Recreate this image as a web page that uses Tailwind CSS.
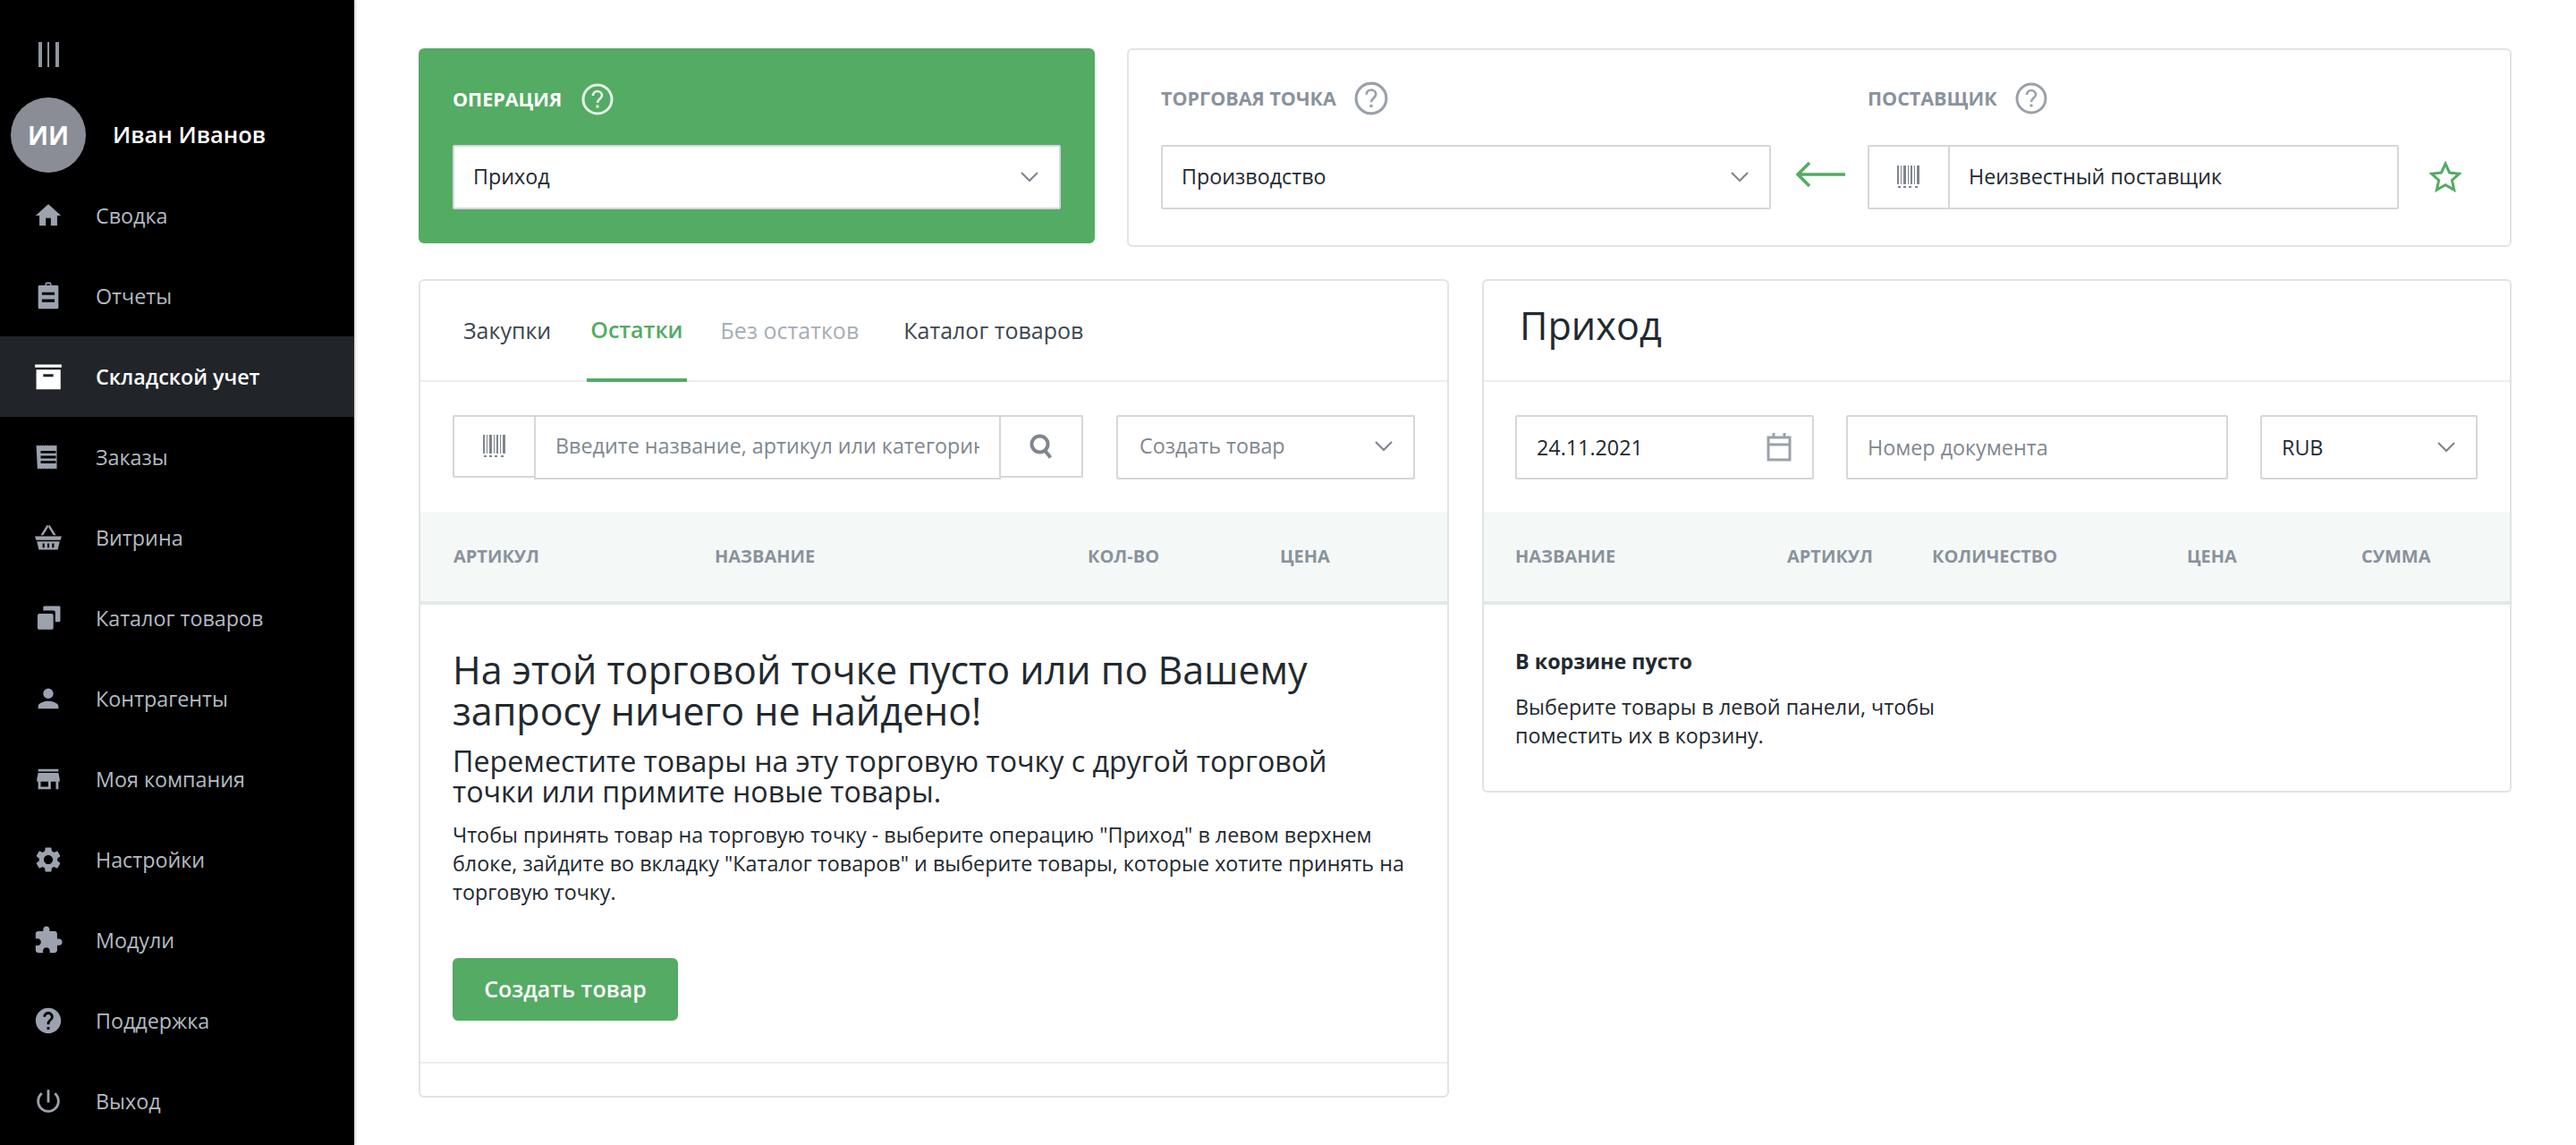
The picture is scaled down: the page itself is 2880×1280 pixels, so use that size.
<!DOCTYPE html>
<html lang="ru">
<head>
  <meta charset="UTF-8" />
  <title>Складской учет</title>
  <script src="https://cdn.jsdelivr.net/npm/@tailwindcss/browser@4"></script>
</head>
<body class="bg-white font-['Open_Sans',sans-serif] text-[#22292f]">
  <div class="flex h-[1280px] w-[2880px] overflow-hidden">

    <!-- sidebar -->
    <aside class="w-[396px] h-full shrink-0 bg-black text-[23.300px] text-[#b4bac2] shadow-[2px_0_2px_rgba(0,0,0,0.15)]">
      <div class="h-[109px] flex items-start pt-[47px] pl-[43px] gap-[6px]">
        <span class="w-[4px] h-[28px] bg-[#8f959e]"></span>
        <span class="w-[2px] h-[28px] bg-[#8f959e]"></span>
        <span class="w-[4px] h-[28px] ml-[1px] bg-[#8f959e]"></span>
      </div>
      <div class="h-[87px] flex items-start">
        <div class="ml-[12px] w-[84px] h-[84px] rounded-full bg-[#8a8d96] flex items-center justify-center text-white font-bold text-[28px]">ИИ</div>
        <div class="ml-[30px] h-[82px] flex items-center text-white font-semibold text-[25.500px]">Иван Иванов</div>
      </div>
      <nav>
        <a class="h-[90px] flex items-center">
          <svg class="w-[34px] h-[34px] ml-[37px] mr-[36px] fill-[#9ca3af]" viewBox="0 0 24 24"><path d="M10 20v-6h4v6h5v-8h3L12 3 2 12h3v8z"/></svg>
          Сводка
        </a>
        <a class="h-[90px] flex items-center">
          <svg class="w-[34px] h-[34px] ml-[37px] mr-[36px] fill-[#9ca3af]" viewBox="0 0 24 24"><path fill-rule="evenodd" d="M4 4.500c0-.6.4-1 1-1h4.500V2.500c0-.8.6-1.500 1.500-1.500h2c.9 0 1.500.7 1.500 1.500v1H19c.6 0 1 .4 1 1V21c0 .6-.4 1-1 1H5c-.6 0-1-.4-1-1zM7 9v2.200h10V9zM7 14.500v2.200h10v-2.200zM10.500 2.300v1.200h3V2.300z"/></svg>
          Отчеты
        </a>
        <a class="h-[90px] flex items-center bg-[#212529] text-white font-semibold">
          <svg class="w-[34px] h-[34px] ml-[37px] mr-[36px] fill-white" viewBox="0 0 24 24"><path fill-rule="evenodd" d="M2.500 2.500h21v2.200h-21zM3.500 6.500h19.200v15.500H3.500zM9 10v2.200h8V10z" transform="translate(-1 0)"/></svg>
          Складской учет
        </a>
        <a class="h-[90px] flex items-center">
          <svg class="w-[34px] h-[34px] ml-[37px] mr-[36px] fill-[#9ca3af]" viewBox="0 0 24 24"><path fill-rule="evenodd" d="M2.500 2.500l.9.6.9-.6.9.6.9-.6.9.6.9-.6.9.6.9-.6.9.6.9-.6.9.6.9-.6.9.6.9-.6.9.6.9-.6.9.6.9-.6v19l-.9-.6-.9.6-.9-.6-.9.6-.9-.6-.9.6-.9-.6-.9.6-.9-.6-.9.6-.9-.6-.9.6-.9-.6-.9.6-.9-.6-.9.6-.9-.6zM6 7v2h12V7zM6 11v2h12v-2zM6 15v2h12v-2z"/></svg>
          Заказы
        </a>
        <a class="h-[90px] flex items-center">
          <svg class="w-[34px] h-[34px] ml-[37px] mr-[36px] fill-[#9ca3af]" viewBox="0 0 24 24"><path fill-rule="evenodd" d="M1.500 11h21l-.8 3H2.300zM3 15h18l-1.500 6.500h-15zM7.500 16.500v3.500h1.500v-3.500zM11.250 16.500v3.500h1.500v-3.500zM15 16.500v3.500h1.500v-3.500zM11 2l1.200 1.200L8 10H6zM13 2l-1.200 1.200L16 10h2z"/></svg>
          Витрина
        </a>
        <a class="h-[90px] flex items-center">
          <svg class="w-[34px] h-[34px] ml-[37px] mr-[36px] fill-[#9ca3af]" viewBox="0 0 24 24"><path d="M3.500 10c0-.9.7-1.500 1.500-1.500h9.500c.9 0 1.500.6 1.500 1.500v9.500c0 .9-.7 1.500-1.500 1.500H5c-.9 0-1.500-.6-1.500-1.500zM8 3.500c0-.6.4-1 1-1h11.500c.6 0 1 .4 1 1V14c0 .6-.4 1-1 1h-3V7.500c0-1-.5-1.500-1.500-1.500H8z"/></svg>
          Каталог товаров
        </a>
        <a class="h-[90px] flex items-center">
          <svg class="w-[34px] h-[34px] ml-[37px] mr-[36px] fill-[#9ca3af]" viewBox="0 0 24 24"><path d="M12 12c2.210 0 4-1.790 4-4s-1.790-4-4-4-4 1.790-4 4 1.790 4 4 4zm0 2c-2.670 0-8 1.340-8 4v2h16v-2c0-2.660-5.330-4-8-4z"/></svg>
          Контрагенты
        </a>
        <a class="h-[90px] flex items-center">
          <svg class="w-[34px] h-[34px] ml-[37px] mr-[36px] fill-[#9ca3af]" viewBox="0 0 24 24"><path d="M20 4H4v2h16V4zm1 10v-2l-1-5H4l-1 5v2h1v6h10v-6h4v6h2v-6h1zm-9 4H6v-4h6v4z"/></svg>
          Моя компания
        </a>
        <a class="h-[90px] flex items-center">
          <svg class="w-[34px] h-[34px] ml-[37px] mr-[36px] fill-[#9ca3af]" viewBox="0 0 24 24"><path d="M19.140 12.940c.04-.3.06-.61.06-.94 0-.32-.02-.64-.07-.94l2.030-1.580c.18-.14.23-.41.12-.61l-1.920-3.320c-.12-.22-.37-.29-.59-.22l-2.390.96c-.5-.38-1.030-.7-1.620-.94l-.36-2.540c-.04-.24-.24-.41-.48-.41h-3.840c-.24 0-.43.17-.47.41l-.36 2.540c-.59.24-1.130.57-1.620.94l-2.390-.96c-.22-.08-.47 0-.59.22L2.740 8.870c-.12.21-.08.47.12.61l2.030 1.580c-.05.3-.09.63-.09.94s.02.64.07.94l-2.030 1.580c-.18.14-.23.41-.12.61l1.920 3.320c.12.22.37.29.59.22l2.390-.96c.5.38 1.030.7 1.620.94l.36 2.540c.05.24.24.41.48.41h3.840c.24 0 .44-.17.47-.41l.36-2.540c.59-.24 1.130-.56 1.620-.94l2.390.96c.22.08.47 0 .59-.22l1.920-3.320c.12-.22.07-.47-.12-.61l-2.010-1.580zM12 15.600c-1.980 0-3.600-1.620-3.600-3.600s1.620-3.600 3.600-3.600 3.600 1.620 3.600 3.600-1.620 3.600-3.600 3.600z"/></svg>
          Настройки
        </a>
        <a class="h-[90px] flex items-center">
          <svg class="w-[34px] h-[34px] ml-[37px] mr-[36px] fill-[#9ca3af]" viewBox="0 0 24 24"><path d="M20.500 11H19V7c0-1.100-.9-2-2-2h-4V3.500C13 2.120 11.880 1 10.500 1S8 2.120 8 3.500V5H4c-1.100 0-1.990.9-1.990 2v3.800H3.500c1.490 0 2.700 1.210 2.700 2.700s-1.210 2.700-2.700 2.700H2V20c0 1.100.9 2 2 2h3.800v-1.500c0-1.490 1.210-2.700 2.700-2.700 1.490 0 2.700 1.210 2.700 2.700V22H17c1.100 0 2-.9 2-2v-4h1.500c1.380 0 2.500-1.120 2.500-2.500S21.880 11 20.500 11z"/></svg>
          Модули
        </a>
        <a class="h-[90px] flex items-center">
          <svg class="w-[34px] h-[34px] ml-[37px] mr-[36px] fill-[#9ca3af]" viewBox="0 0 24 24"><path d="M12 2C6.480 2 2 6.480 2 12s4.480 10 10 10 10-4.480 10-10S17.520 2 12 2zm1 17h-2v-2h2v2zm2.070-7.750l-.9.92C13.450 12.900 13 13.500 13 15h-2v-.5c0-1.100.45-2.100 1.170-2.830l1.240-1.260c.37-.36.59-.86.59-1.410 0-1.100-.9-2-2-2s-2 .9-2 2H8c0-2.210 1.790-4 4-4s4 1.790 4 4c0 .88-.36 1.680-.93 2.250z"/></svg>
          Поддержка
        </a>
        <a class="h-[90px] flex items-center">
          <svg class="w-[34px] h-[34px] ml-[37px] mr-[36px] fill-[#9ca3af]" viewBox="0 0 24 24"><path d="M13 3h-2v10h2V3zm4.830 2.170l-1.420 1.420C17.990 7.860 19 9.810 19 12c0 3.870-3.130 7-7 7s-7-3.130-7-7c0-2.190 1.010-4.140 2.580-5.420L6.170 5.170C4.230 6.820 3 9.260 3 12c0 4.970 4.030 9 9 9s9-4.030 9-9c0-2.740-1.230-5.180-3.170-6.830z"/></svg>
          Выход
        </a>
      </nav>
    </aside>

    <!-- main -->
    <main class="flex-1 pl-[72px] pr-[72px] pt-[54px]">

      <!-- top row -->
      <div class="flex items-start gap-[36px]">
        <div class="w-[756px] h-[218px] rounded-[6px] bg-[#54ab63] px-[38px] pt-[39px]">
          <div class="flex items-center h-[36px] gap-[22px] text-[21.500px] font-bold text-white">
            ОПЕРАЦИЯ
            <svg class="w-[36px] h-[36px]" viewBox="0 0 36 36" fill="none" stroke="#e8f6ea" stroke-width="3"><circle cx="18" cy="18" r="16"/><path d="M13 14c0-3 2.200-5 5-5s5 2 5 4.800c0 3.700-5 4-5 8.200" stroke-width="2.600"/><path d="M18 24.500v3" stroke-width="3"/></svg>
          </div>
          <div class="mt-[33px] h-[72px] bg-white rounded-[2px] border-2 border-[#d5d7da] flex items-center justify-between pl-[21px] pr-[22px] pb-[1px] text-[23.300px]">
            Приход
            <svg class="w-[22px] h-[14px]" viewBox="0 0 22 14" fill="none" stroke="#80868e" stroke-width="2.200"><path d="M2 2l9 9 9-9"/></svg>
          </div>
        </div>

        <div class="flex-1 h-[222px] rounded-[6px] border-2 border-[#e1e3e5] pl-[36px] pt-[36px] flex items-start">
          <div class="w-[682px]">
            <div class="flex items-center h-[36px] gap-[20px] text-[21.500px] font-bold text-[#8a929c]">
              ТОРГОВАЯ ТОЧКА
              <svg class="w-[38px] h-[38px]" viewBox="0 0 36 36" fill="none" stroke="#9aa1aa" stroke-width="3"><circle cx="18" cy="18" r="16"/><path d="M13 14c0-3 2.200-5 5-5s5 2 5 4.800c0 3.700-5 4-5 8.200" stroke-width="2.600"/><path d="M18 24.500v3" stroke-width="3"/></svg>
            </div>
            <div class="mt-[34px] h-[72px] bg-white rounded-[2px] border-2 border-[#d5d7da] flex items-center justify-between pl-[21px] pr-[22px] pb-[1px] text-[23.300px]">
              Производство
              <svg class="w-[22px] h-[14px]" viewBox="0 0 22 14" fill="none" stroke="#80868e" stroke-width="2.200"><path d="M2 2l9 9 9-9"/></svg>
            </div>
          </div>
          <svg class="w-[56px] h-[32px] mt-[87px] ml-[27px] mr-[25px]" viewBox="0 0 56 32" fill="none" stroke="#54ab63" stroke-width="3.500"><path d="M56 16H3M16 3L3 16l13 13"/></svg>
          <div class="w-[594px]">
            <div class="flex items-center h-[36px] gap-[20px] text-[21.500px] font-bold text-[#8a929c]">
              ПОСТАВЩИК
              <svg class="w-[36px] h-[36px]" viewBox="0 0 36 36" fill="none" stroke="#9aa1aa" stroke-width="3"><circle cx="18" cy="18" r="16"/><path d="M13 14c0-3 2.200-5 5-5s5 2 5 4.800c0 3.700-5 4-5 8.200" stroke-width="2.600"/><path d="M18 24.500v3" stroke-width="3"/></svg>
            </div>
            <div class="mt-[34px] h-[72px] bg-white rounded-[2px] border-2 border-[#d5d7da] flex items-center text-[23.300px]">
              <div class="w-[90px] h-full border-r-2 border-[#d5d7da] flex items-center justify-center">
                <svg class="w-[26px] h-[26px]" viewBox="0 0 26 26" fill="#80868e"><path d="M0 0h2v21H0zM4 0h1v21H4zM7 0h3v21H7zM12 0h1v21h-1zM15 0h2v21h-2zM19 0h1v21h-1zM22 0h3v21h-3zM1 23h3v2H1zM7 23h3v2H7zM13 23h3v2h-3zM20 23h3v2h-3z"/></svg>
              </div>
              <div class="pl-[21px] pb-[1px]">Неизвестный поставщик</div>
            </div>
          </div>
          <svg class="w-[36px] h-[36px] mt-[88px] ml-[34px]" viewBox="0 0 36 36" fill="none" stroke="#54ab63" stroke-width="3"><path d="M18 3l4.600 10 10.900 1.200-8.100 7.300 2.300 10.800L18 26.800 8.300 32.300l2.300-10.800L2.500 14.200 13.400 13z"/></svg>
        </div>
      </div>

      <!-- panels -->
      <div class="mt-[36px] flex items-start gap-[37px]">

        <!-- left panel -->
        <div class="w-[1152px] h-[915px] rounded-[6px] border-2 border-[#e1e3e5] flex flex-col">
          <div class="h-[113px] border-b-2 border-[#eceef0] flex pl-[48px] text-[25px]">
            <div class="flex items-center mr-[40px] text-[#3d4650]">Закупки</div>
            <div class="flex items-center px-[4px] mr-[38px] border-b-4 border-[#54ab63] -mb-[2px] font-semibold text-[#54ab63]">Остатки</div>
            <div class="flex items-center mr-[50px] text-[#a7adb4]">Без остатков</div>
            <div class="flex items-center text-[#3d4650]">Каталог товаров</div>
          </div>
          <div class="flex pl-[36px] pt-[37px] h-[145px]">
            <div class="w-[91px] h-[70px] rounded-l-[2px] border-2 border-r-0 border-[#d5d7da] flex items-center justify-center">
              <svg class="w-[26px] h-[26px]" viewBox="0 0 26 26" fill="#80868e"><path d="M0 0h2v21H0zM4 0h1v21H4zM7 0h3v21H7zM12 0h1v21h-1zM15 0h2v21h-2zM19 0h1v21h-1zM22 0h3v21h-3zM1 23h3v2H1zM7 23h3v2H7zM13 23h3v2h-3zM20 23h3v2h-3z"/></svg>
            </div>
            <input class="w-[522px] h-[72px] border-2 border-[#d5d7da] px-[22px] pb-[4px] text-[23.300px] outline-none placeholder:text-[#7f8790]" placeholder="Введите название, артикул или категорию" />
            <div class="w-[92px] h-[70px] rounded-r-[2px] border-2 border-l-0 border-[#d5d7da] flex items-center justify-center">
              <svg class="w-[26px] h-[28px]" viewBox="0 0 26 28" fill="none" stroke="#80868e" stroke-width="4"><circle cx="11.500" cy="11.500" r="9"/><path d="M17.500 19l6 7.500"/></svg>
            </div>
            <div class="ml-[37px] w-[334px] h-[72px] rounded-[2px] border-2 border-[#d5d7da] flex items-center justify-between pl-[24px] pr-[22px] pb-[3px] text-[23.300px] text-[#7f8790]">
              Создать товар
              <svg class="w-[22px] h-[14px]" viewBox="0 0 22 14" fill="none" stroke="#80868e" stroke-width="2.200"><path d="M2 2l9 9 9-9"/></svg>
            </div>
          </div>
          <div class="h-[104px] shrink-0 bg-[#f4f8f7] border-b-4 border-[#e3e8e8] grid grid-cols-[292px_417px_215px_1fr] items-center pl-[37px] text-[20px] font-bold text-[#8a929c]">
            <div>АРТИКУЛ</div>
            <div>НАЗВАНИЕ</div>
            <div>КОЛ-ВО</div>
            <div>ЦЕНА</div>
          </div>
          <div class="flex-1 pl-[36px] pr-[30px] pt-[50px] border-b-2 border-[#eceef0]">
            <h2 class="text-[43px] leading-[46px]">На этой торговой точке пусто или по Вашему запросу ничего не найдено!</h2>
            <h3 class="mt-[16px] max-w-[1050px] text-[32.200px] leading-[34px]">Переместите товары на эту торговую точку с другой торговой точки или примите новые товары.</h3>
            <p class="mt-[15px] text-[23.300px] leading-[32px]">Чтобы принять товар на торговую точку - выберите операцию "Приход" в левом верхнем блоке, зайдите во вкладку "Каталог товаров" и выберите товары, которые хотите принять на торговую точку.</p>
            <button class="mt-[58px] w-[252px] h-[70px] rounded-[6px] bg-[#54ab63] text-white text-[25px] font-semibold">Создать товар</button>
          </div>
          <div class="h-[36px] shrink-0"></div>
        </div>

        <!-- right panel -->
        <div class="flex-1 h-[574px] rounded-[6px] border-2 border-[#e1e3e5] flex flex-col">
          <div class="h-[113px] shrink-0 border-b-2 border-[#eceef0] flex items-center pl-[40px] pb-[10px] text-[43.200px]">Приход</div>
          <div class="flex pl-[35px] pt-[37px] h-[145px] shrink-0 gap-[36px] text-[23.300px]">
            <div class="w-[334px] h-[72px] rounded-[2px] border-2 border-[#d5d7da] flex items-center justify-between pl-[22px] pr-[22px]">
              24.11.2021
              <svg class="w-[30px] h-[32px]" viewBox="0 0 30 32" fill="none" stroke="#9aa1aa" stroke-width="3"><path d="M3 5h24v25H3zM3 13h24M9 0v6M21 0v6"/></svg>
            </div>
            <input class="w-[427px] h-[72px] rounded-[2px] border-2 border-[#d5d7da] px-[22px] outline-none placeholder:text-[#7f8790]" placeholder="Номер документа" />
            <div class="w-[243px] h-[72px] rounded-[2px] border-2 border-[#d5d7da] flex items-center justify-between pl-[22px] pr-[22px]">
              RUB
              <svg class="w-[22px] h-[14px]" viewBox="0 0 22 14" fill="none" stroke="#80868e" stroke-width="2.200"><path d="M2 2l9 9 9-9"/></svg>
            </div>
          </div>
          <div class="h-[104px] shrink-0 bg-[#f4f8f7] border-b-4 border-[#e3e8e8] grid grid-cols-[304px_162px_285px_195px_1fr] items-center pl-[35px] text-[20px] font-bold text-[#8a929c]">
            <div>НАЗВАНИЕ</div>
            <div>АРТИКУЛ</div>
            <div>КОЛИЧЕСТВО</div>
            <div>ЦЕНА</div>
            <div>СУММА</div>
          </div>
          <div class="pl-[35px] pt-[47px]">
            <div class="text-[23.300px] font-bold leading-[32px]">В корзине пусто</div>
            <p class="mt-[19px] w-[560px] text-[23.300px] leading-[32px]">Выберите товары в левой панели, чтобы поместить их в корзину.</p>
          </div>
        </div>
      </div>
    </main>
  </div>
</body>
</html>
